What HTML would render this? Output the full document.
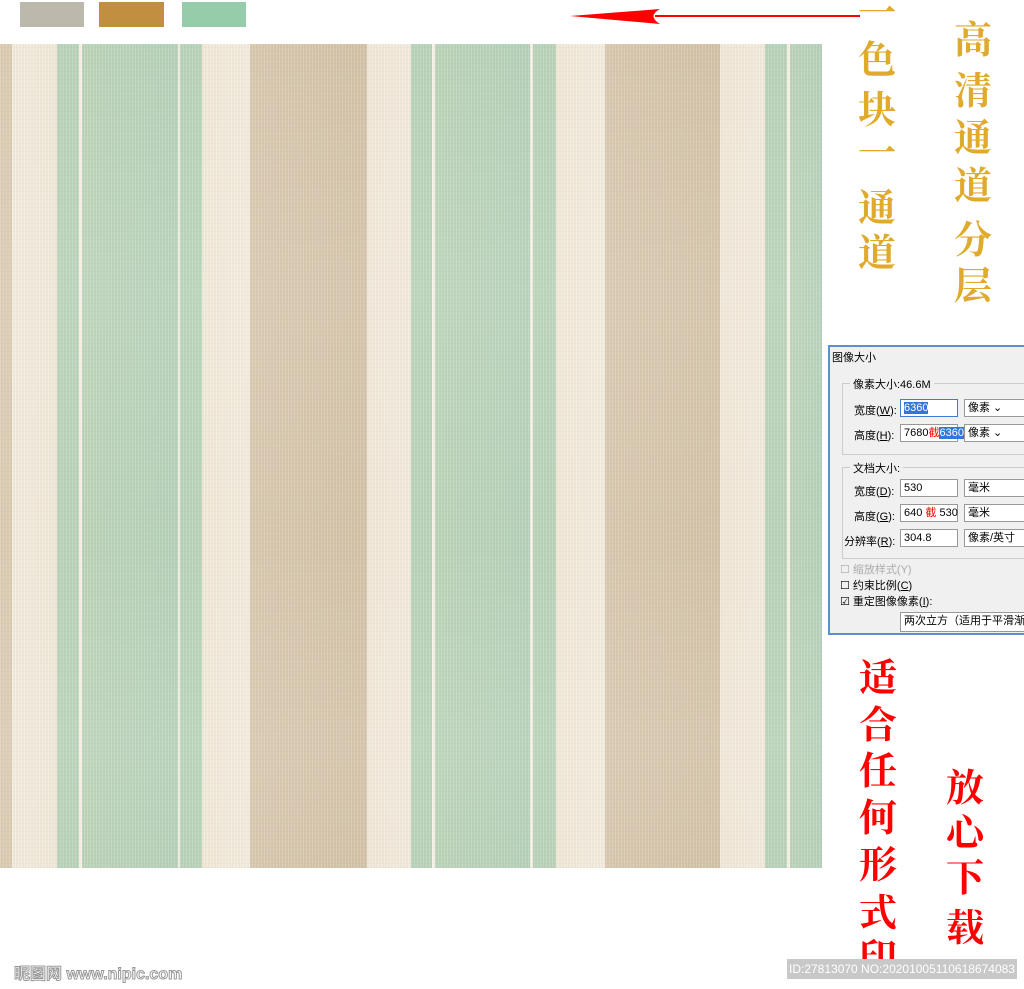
<!DOCTYPE html>
<html><head><meta charset="utf-8"><style>
body{margin:0;width:1024px;height:989px;background:#fff;position:relative;overflow:hidden;font-family:"Liberation Sans","Noto Sans CJK SC",sans-serif}
.a{position:absolute}
.pat{left:0;top:44px;width:822px;height:824px;background:linear-gradient(90deg,#dccdb6 0,#dccdb6 12px,#f3ede1 12px,#f1eadc 57px,#b9d5bd 57px,#b9d5bd 79px,#f8f3ea 79px,#f8f3ea 82px,#bcd6bd 82px,#b6d3bd 178px,#f6f0e6 178px,#f6f0e6 180px,#b9d5bd 180px,#b9d5bd 202px,#f2eadb 202px,#f4eee2 250px,#d9cab3 250px,#d4c4ab 367px,#f2eadc 367px,#f3ece0 411px,#b9d5bd 411px,#b9d5bd 432px,#f8f3ea 432px,#f8f3ea 435px,#bcd6bd 435px,#b6d3bd 530px,#f6f0e6 530px,#f6f0e6 533px,#b9d5bd 533px,#b9d5bd 556px,#f2eadb 556px,#f4eee2 605px,#d9cab3 605px,#d4c4ab 720px,#f2eadc 720px,#f3ece0 765px,#b9d5bd 765px,#b9d5bd 787px,#f8f3ea 787px,#f8f3ea 790px,#bcd6bd 790px,#b6d3bd 822px)}
.tex{left:0;top:44px;width:822px;height:824px;background:repeating-linear-gradient(90deg,rgba(255,255,255,.1) 0,rgba(255,255,255,.1) 1px,rgba(150,120,70,.05) 1px,rgba(150,120,70,.05) 3px),repeating-linear-gradient(0deg,rgba(150,120,70,.04) 0,rgba(150,120,70,.04) 1px,transparent 1px,transparent 4px),linear-gradient(180deg,rgba(255,255,255,0),rgba(255,255,255,.08) 30%,rgba(255,255,255,0) 60%,rgba(255,255,255,.08) 85%,rgba(255,255,255,0))}
.g{color:#e0aa2c;font-size:38px;font-family:"Noto Serif CJK SC",serif;font-weight:bold;line-height:1;width:44px;text-align:center}
.r{color:#f00;font-size:38px;font-family:"Noto Serif CJK SC",serif;font-weight:bold;line-height:1;width:44px;text-align:center}
.dlg{left:828px;top:345px;width:200px;height:290px;background:#f0f0f0;border:2px solid #5b8fd0;box-sizing:border-box;font-size:11px;color:#000}
.dlg .a{white-space:nowrap}
.in{background:#fff;border:1px solid #999;height:18px;box-sizing:border-box;padding-left:3px;line-height:16px}
.grp{border:1px solid #ccc}
</style></head><body>
<div class="a" style="left:20px;top:2px;width:64px;height:25px;background:#bcb8ac"></div>
<div class="a" style="left:99px;top:2px;width:65px;height:25px;background:#c08f40"></div>
<div class="a" style="left:182px;top:2px;width:64px;height:25px;background:#96ccaa"></div>
<svg class="a" style="left:565px;top:6px" width="300" height="20"><line x1="90" y1="10" x2="295" y2="10" stroke="#f00" stroke-width="2"/><path d="M5 10 L95 3 Q82 10 95 18 Z" fill="#f00"/></svg>
<div class="a pat"></div><div class="a tex"></div>
<div class="g a" style="left:855px;top:-9px">一</div>
<div class="g a" style="left:855px;top:38px">色</div>
<div class="g a" style="left:855px;top:88px">块</div>
<div class="g a" style="left:855px;top:131px">一</div>
<div class="g a" style="left:855px;top:186px">通</div>
<div class="g a" style="left:855px;top:231px">道</div>
<div class="g a" style="left:951px;top:18px">高</div>
<div class="g a" style="left:951px;top:69px">清</div>
<div class="g a" style="left:951px;top:116px">通</div>
<div class="g a" style="left:951px;top:164px">道</div>
<div class="g a" style="left:951px;top:218px">分</div>
<div class="g a" style="left:951px;top:264px">层</div>
<div class="r a" style="left:856px;top:656px">适</div>
<div class="r a" style="left:856px;top:703px">合</div>
<div class="r a" style="left:856px;top:749px">任</div>
<div class="r a" style="left:856px;top:796px">何</div>
<div class="r a" style="left:856px;top:843px">形</div>
<div class="r a" style="left:856px;top:891px">式</div>
<div class="r a" style="left:856px;top:936px">印</div>
<div class="r a" style="left:943px;top:766px">放</div>
<div class="r a" style="left:943px;top:811px">心</div>
<div class="r a" style="left:943px;top:856px">下</div>
<div class="r a" style="left:943px;top:906px">载</div>
<div class="a dlg">
<div class="a" style="left:2px;top:2px">图像大小</div>
<div class="a grp" style="left:12px;top:36px;width:190px;height:70px"></div>
<div class="a" style="left:20px;top:29px;background:#f0f0f0;padding:0 3px">像素大小:46.6M</div>
<div class="a" style="left:24px;top:55px">宽度(<u>W</u>):</div>
<div class="a in" style="left:70px;top:52px;width:58px;border-color:#3c7fd0"><span style="background:#3078d8;color:#fff">6360</span></div>
<div class="a in" style="left:134px;top:52px;width:70px">像素 ⌄</div>
<div class="a" style="left:24px;top:80px">高度(<u>H</u>):</div>
<div class="a in" style="left:70px;top:77px;width:58px">7680<span style="color:#f00">截</span><span style="background:#3078d8;color:#fff">6360</span></div>
<div class="a in" style="left:134px;top:77px;width:70px">像素 ⌄</div>
<div class="a grp" style="left:12px;top:120px;width:190px;height:90px"></div>
<div class="a" style="left:20px;top:113px;background:#f0f0f0;padding:0 3px">文档大小:</div>
<div class="a" style="left:24px;top:136px">宽度(<u>D</u>):</div>
<div class="a in" style="left:70px;top:132px;width:58px">530</div>
<div class="a in" style="left:134px;top:132px;width:70px">毫米</div>
<div class="a" style="left:24px;top:161px">高度(<u>G</u>):</div>
<div class="a in" style="left:70px;top:157px;width:58px">640 <span style="color:#f00">截</span> 530</div>
<div class="a in" style="left:134px;top:157px;width:70px">毫米</div>
<div class="a" style="left:14px;top:186px">分辨率(<u>R</u>):</div>
<div class="a in" style="left:70px;top:182px;width:58px">304.8</div>
<div class="a in" style="left:134px;top:182px;width:70px">像素/英寸</div>
<div class="a" style="left:10px;top:214px;color:#aaa">☐ 缩放样式(Y)</div>
<div class="a" style="left:10px;top:230px">☐ 约束比例(<u>C</u>)</div>
<div class="a" style="left:10px;top:246px">☑ 重定图像像素(<u>I</u>):</div>
<div class="a in" style="left:70px;top:265px;width:134px;height:20px">两次立方（适用于平滑渐变</div>
</div>
<div class="a" style="left:14px;top:960px;font-size:16px;color:#fff;-webkit-text-stroke:1px #999;font-weight:bold">昵图网 www.nipic.com</div>
<div class="a" style="left:787px;top:959px;width:230px;height:20px;background:#c8c8c8;color:#fff;font-size:12px;line-height:20px;text-align:center">ID:27813070 NO:20201005110618674083</div>
</body></html>
